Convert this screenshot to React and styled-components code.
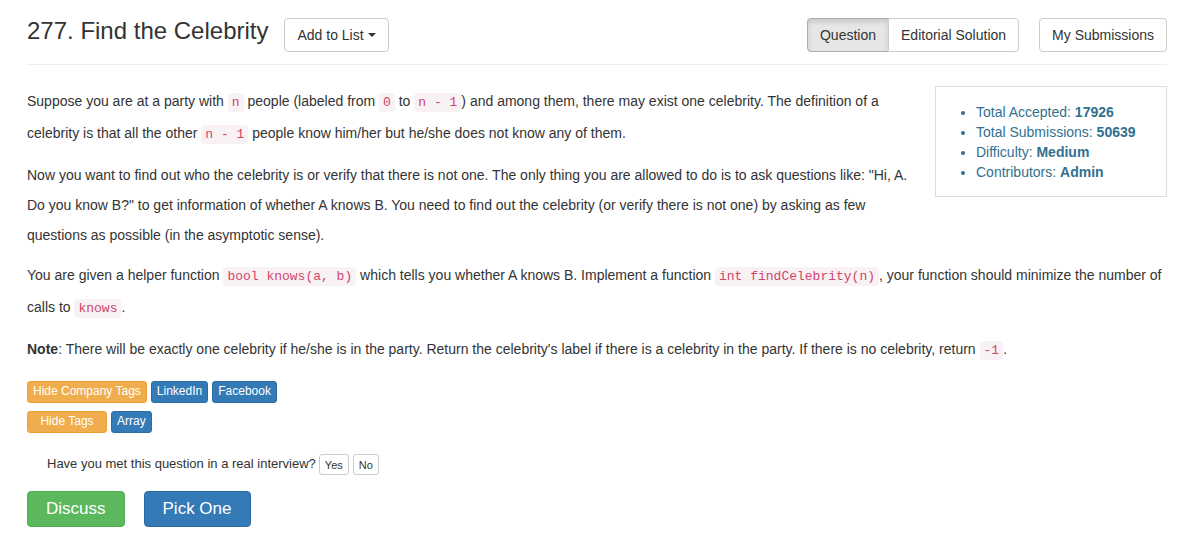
import styled, { createGlobalStyle } from "styled-components";

const GlobalStyle = createGlobalStyle`
  * { box-sizing: border-box; }
  body {
    margin: 0;
    background: #fff;
    color: #333;
    font-family: "Liberation Sans", Arial, sans-serif;
    font-size: 14px;
    line-height: 1.42857;
  }
`;

const stats = [
  { label: "Total Accepted:", value: "17926" },
  { label: "Total Submissions:", value: "50639" },
  { label: "Difficulty:", value: "Medium" },
  { label: "Contributors:", value: "Admin" },
];

function App() {
  return (
    <>
      <GlobalStyle />
      <Container>
        <Header>
          <TitleGroup>
            <Title>277. Find the Celebrity</Title>
            <Btn>
              Add to List <Caret />
            </Btn>
          </TitleGroup>
          <Actions>
            <BtnGroup>
              <Btn $active>Question</Btn>
              <Btn>Editorial Solution</Btn>
            </BtnGroup>
            <Btn>My Submissions</Btn>
          </Actions>
        </Header>
        <Rule />

        <Content>
          <StatsBox>
            <StatsList>
              {stats.map((s) => (
                <li key={s.label}>
                  {s.label} <b>{s.value}</b>
                </li>
              ))}
            </StatsList>
          </StatsBox>
          <P>
            Suppose you are at a party with <Code>n</Code> people (labeled from <Code>0</Code> to{" "}
            <Code>n - 1</Code>) and among them, there may exist one celebrity. The definition of a
            celebrity is that all the other <Code>n - 1</Code> people know him/her but he/she does not
            know any of them.
          </P>
          <P>
            Now you want to find out who the celebrity is or verify that there is not one. The only
            thing you are allowed to do is to ask questions like: "Hi, A. Do you know B?" to get
            information of whether A knows B. You need to find out the celebrity (or verify there is
            not one) by asking as few questions as possible (in the asymptotic sense).
          </P>
          <P>
            You are given a helper function <Code>bool knows(a, b)</Code> which tells you whether A
            knows B. Implement a function <Code>int findCelebrity(n)</Code>, your function should
            minimize the number of calls to <Code>knows</Code>.
          </P>
          <P>
            <b>Note</b>: There will be exactly one celebrity if he/she is in the party. Return the
            celebrity's label if there is a celebrity in the party. If there is no celebrity, return{" "}
            <Code>-1</Code>.
          </P>
        </Content>

        <Tags>
          <TagRow>
            <Tag $tone="warning">Hide Company Tags</Tag>
            <Tag $tone="primary">LinkedIn</Tag>
            <Tag $tone="primary">Facebook</Tag>
          </TagRow>
          <TagRow>
            <Tag $tone="warning" $wide>Hide Tags</Tag>
            <Tag $tone="primary">Array</Tag>
          </TagRow>
        </Tags>

        <Interview>
          Have you met this question in a real interview?
          <SmallBtns>
            <SmallBtn>Yes</SmallBtn>
            <SmallBtn>No</SmallBtn>
          </SmallBtns>
        </Interview>

        <Footer>
          <BigBtn $tone="success">Discuss</BigBtn>
          <BigBtn $tone="primary">Pick One</BigBtn>
        </Footer>
      </Container>
    </>
  );
}
export default App;

const tones = {
  warning: { bg: "#f0ad4e", border: "#eea236" },
  primary: { bg: "#337ab7", border: "#2e6da4" },
  success: { bg: "#5cb85c", border: "#4cae4c" },
};

const Container = styled.div`
  width: 1170px;
  margin: 0 auto;
  padding: 0 16px 20px 14px;
`;

const Header = styled.div`
  display: flex;
  justify-content: space-between;
  align-items: flex-start;
  padding-top: 18px;
`;

const TitleGroup = styled.div`
  display: flex;
  align-items: flex-start;
  gap: 16px;
`;

const Title = styled.h3`
  margin: 0;
  font-size: 24px;
  font-weight: 500;
  line-height: 26px;
  color: #333;
`;

const Actions = styled.div`
  display: flex;
  gap: 20px;
`;

const BtnGroup = styled.div`
  display: flex;
  & > button:first-child {
    border-top-right-radius: 0;
    border-bottom-right-radius: 0;
  }
  & > button:last-child {
    border-top-left-radius: 0;
    border-bottom-left-radius: 0;
    margin-left: -1px;
  }
`;

const Btn = styled.button`
  display: inline-flex;
  align-items: center;
  gap: 4px;
  height: 34px;
  padding: 6px 12px;
  font-family: inherit;
  font-size: 14px;
  line-height: 20px;
  color: #333;
  background: ${(p) => (p.$active ? "#e6e6e6" : "#fff")};
  border: 1px solid ${(p) => (p.$active ? "#adadad" : "#ccc")};
  border-radius: 4px;
  box-shadow: ${(p) => (p.$active ? "inset 0 3px 5px rgba(0,0,0,.125)" : "none")};
  cursor: pointer;
`;

const Caret = styled.span`
  display: inline-block;
  width: 0;
  height: 0;
  border-top: 4px solid #333;
  border-left: 4px solid transparent;
  border-right: 4px solid transparent;
`;

const Rule = styled.hr`
  margin: 12px 0 21px;
  border: 0;
  border-top: 1px solid #eee;
`;

const Content = styled.div`
  &::after {
    content: "";
    display: block;
    clear: both;
  }
`;

const StatsBox = styled.div`
  float: right;
  width: 232px;
  margin-left: 22px;
  margin-bottom: 10px;
  border: 1px solid #ddd;
  padding: 15px 0 14px;
`;

const StatsList = styled.ul`
  margin: 0;
  padding-left: 40px;
  color: #31708f;
  font-size: 14px;
  line-height: 20px;
  b { font-weight: 700; }
`;

const P = styled.p`
  margin: 0 0 10px;
  line-height: 30px;
`;

const Code = styled.code`
  font-family: "Liberation Mono", "Courier New", monospace;
  font-size: 13px;
  padding: 2px 4px;
  color: #d0466a;
  background: #f9f2f4;
  border-radius: 4px;
`;

const Tags = styled.div`
  display: flex;
  flex-direction: column;
  gap: 8px;
  margin-top: 5px;
`;

const TagRow = styled.div`
  display: flex;
  gap: 4px;
`;

const Tag = styled.span`
  display: inline-flex;
  align-items: center;
  justify-content: center;
  height: 22px;
  padding: 0 5px;
  min-width: ${(p) => (p.$wide ? "80px" : "0")};
  font-size: 12px;
  color: #fff;
  border-radius: 3px;
  background: ${(p) => tones[p.$tone].bg};
  border: 1px solid ${(p) => tones[p.$tone].border};
`;

const Interview = styled.div`
  display: flex;
  align-items: center;
  gap: 3px;
  margin: 21px 0 0 20px;
  font-size: 13px;
  color: #333;
`;

const SmallBtns = styled.div`
  display: flex;
  gap: 4px;
`;

const SmallBtn = styled.button`
  height: 21px;
  padding: 0 5px;
  font-family: inherit;
  font-size: 11px;
  color: #333;
  background: #fff;
  border: 1px solid #ccc;
  border-radius: 3px;
`;

const Footer = styled.div`
  display: flex;
  gap: 19px;
  margin-top: 16px;
`;

const BigBtn = styled.button`
  height: 36px;
  padding: 0 18px;
  font-family: inherit;
  font-size: 17px;
  color: #fff;
  border-radius: 4px;
  background: ${(p) => tones[p.$tone].bg};
  border: 1px solid ${(p) => tones[p.$tone].border};
`;
